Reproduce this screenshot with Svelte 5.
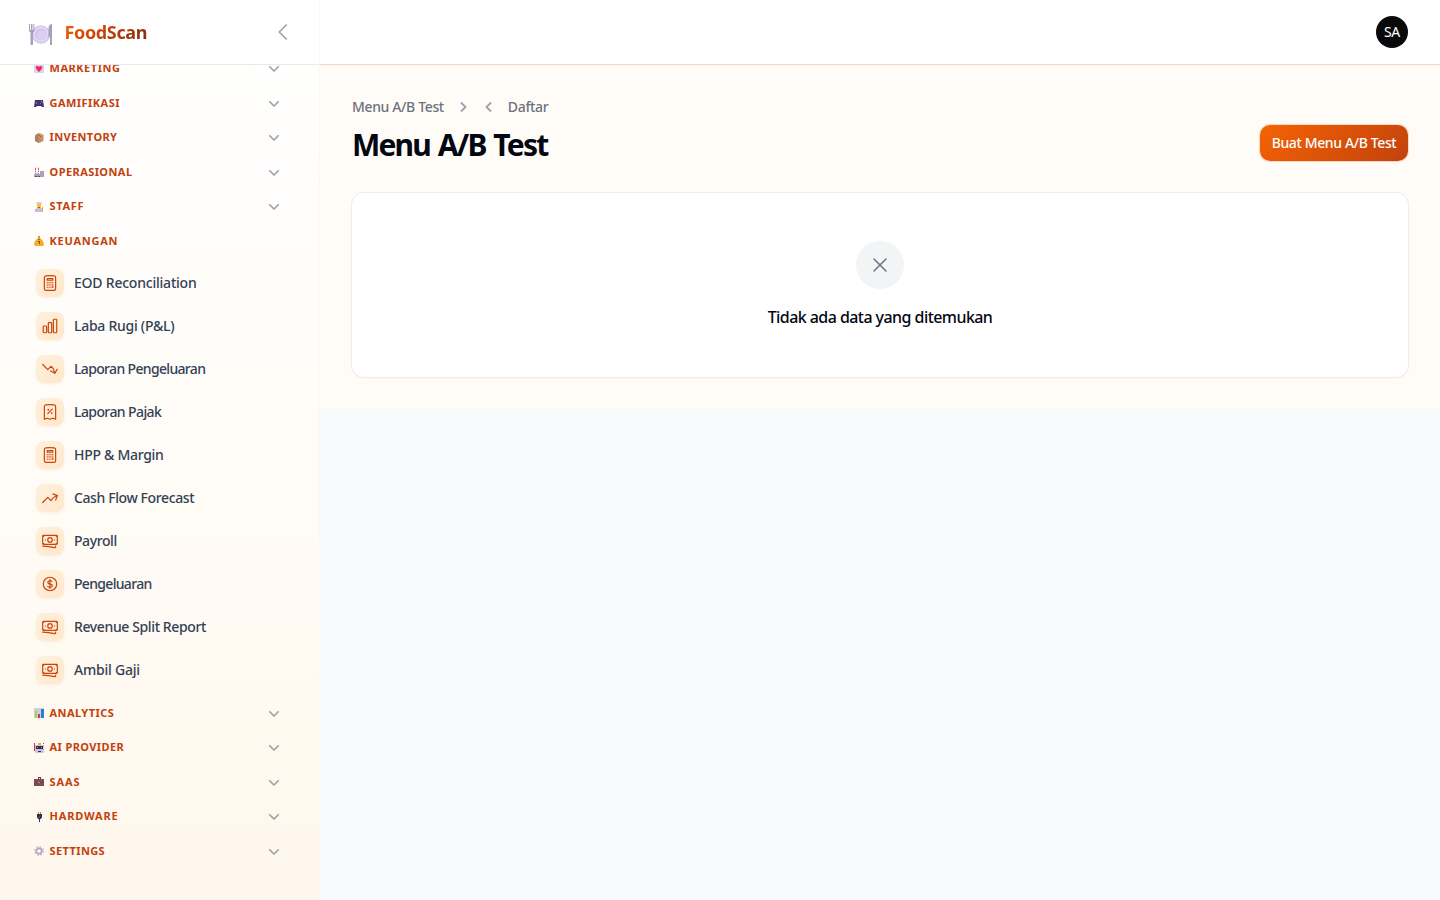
<script lang="ts">
	type Shape = { d: string; fill: string };
	type Group = { label: string; icon: string; tracking: number; open?: boolean };

	const emoji: Record<string, Shape[]> = {
		marketing: [
			{ d: 'M0 1h10v8H0z', fill: '#ddd5ee' },
			{ d: 'M0 2l5 4 5-4v1L5 8 0 3z', fill: '#c9bce0' },
			{ d: 'M2 3.5C2 1.7 4.5 1.7 5 3c.5-1.3 3-1.3 3 .5C8 5.5 5 8 5 8S2 5.5 2 3.5z', fill: '#f8255f' }
		],
		game: [
			{ d: 'M1 2h8l1 7H8L7 8H3L2 9H0z', fill: '#43346f' },
			{ d: 'M2 4h1v2H2z', fill: '#7d70bb' },
			{ d: 'M6 5h1v1H6z', fill: '#2899d8' },
			{ d: 'M7 3h1v1H7z', fill: '#e0b34c' },
			{ d: 'M8 4h1v1H8z', fill: '#cf3768' }
		],
		box: [
			{ d: 'M5 0l4.5 2v6L5 10 1 8V2z', fill: '#c39070' },
			{ d: 'M1 2l4 2v6L1 8z', fill: '#b07f60' },
			{ d: 'M5 0l4.5 2L5 4 1 2z', fill: '#d3a06d' },
			{ d: 'M3 1l4 2v1L3 2z', fill: '#77604e' }
		],
		factory: [
			{ d: 'M1 0h1v8H1zM4 0h1v8H4z', fill: '#d9d3e2' },
			{ d: 'M1 1h1v2H1zM4 1h1v2H4zM1 4h1v1H1zM4 4h1v1H4z', fill: '#df4668' },
			{ d: 'M0 7l3-1 3 1V4h4v6H0z', fill: '#aaa2b9' },
			{ d: 'M1 9h2v1H1zM4 9h2v1H4z', fill: '#584d69' }
		],
		cook: [
			{ d: 'M3 0h4l1 1-1 2H3L2 1z', fill: '#d4cae4' },
			{ d: 'M3 2h4v4H3z', fill: '#ffc327' },
			{ d: 'M1 7l3-1h3l2 1v3H1z', fill: '#c8bbd8' },
			{ d: 'M4 5h2v1H4z', fill: '#d53c4b' },
			{ d: 'M8 5h1v4H8z', fill: '#ebad23' }
		],
		money: [
			{ d: 'M4 0h2v3H4z', fill: '#d39a23' },
			{ d: 'M4 2h2l3 3 1 3-1 2H1L0 8l1-3z', fill: '#f4ac2b' },
			{ d: 'M4 3h2v1H4z', fill: '#ae661c' },
			{ d: 'M5 5h1v3H5zM4 5h2v1H4z', fill: '#805022' }
		],
		chart: [
			{ d: 'M0 0h10v10H0z', fill: '#d4cadf' },
			{ d: 'M1 3h2v7H1z', fill: '#91df40' },
			{ d: 'M4 6h2v4H4z', fill: '#e62a67' },
			{ d: 'M7 1h3v9H7z', fill: '#2084d2' }
		],
		robot: [
			{ d: 'M1 2h9v7L9 10H2L1 9z', fill: '#cbc2dc' },
			{ d: 'M0 0h1v8H0zM9 0h1v1H9z', fill: '#e42460' },
			{ d: 'M4 0h3v2H4z', fill: '#ebb52d' },
			{ d: 'M2 3h7v3H2z', fill: '#302a4c' },
			{ d: 'M3 4h1v1H3zM7 4h1v1H7z', fill: '#4bb9e5' },
			{ d: 'M4 8h3v1H4z', fill: '#37304e' }
		],
		bag: [
			{ d: 'M4 0h3v2H6V1H5v1H4z', fill: '#56404e' },
			{ d: 'M0 2h10v7H0z', fill: '#7e4c55' },
			{ d: 'M0 5h10v1H0z', fill: '#6b424c' },
			{ d: 'M4 5h2v1H4z', fill: '#c68b72' }
		],
		plug: [
			{ d: 'M4 0h1v3H4zM6 0h1v3H6z', fill: '#bd8950' },
			{ d: 'M3 2h5v3L7 7H6v3H5V7H4L3 5z', fill: '#362b48' },
			{ d: 'M5 4h1v2H5z', fill: '#625277' }
		]
	};

	const before: Group[] = [
		{ label: 'MARKETING', icon: 'marketing', tracking: 0.52 },
		{ label: 'GAMIFIKASI', icon: 'game', tracking: 0.46 },
		{ label: 'INVENTORY', icon: 'box', tracking: 0.38 },
		{ label: 'OPERASIONAL', icon: 'factory', tracking: 0.43 },
		{ label: 'STAFF', icon: 'cook', tracking: 0.7 },
		{ label: 'KEUANGAN', icon: 'money', tracking: 0.76, open: true }
	];
	const after: Group[] = [
		{ label: 'ANALYTICS', icon: 'chart', tracking: 0.46 },
		{ label: 'AI PROVIDER', icon: 'robot', tracking: 0.4 },
		{ label: 'SAAS', icon: 'bag', tracking: 0.88 },
		{ label: 'HARDWARE', icon: 'plug', tracking: 0.82 },
		{ label: 'SETTINGS', icon: 'gear', tracking: 0.4 }
	];

	const icons = {
		calculator:
			'M15.75 15.75V18m-7.5-6.75h.008v.008H8.25v-.008Zm0 2.25h.008v.008H8.25V13.5Zm0 2.25h.008v.008H8.25v-.008Zm0 2.25h.008v.008H8.25V18Zm2.498-6.75h.007v.008h-.007v-.008Zm0 2.25h.007v.008h-.007V13.5Zm0 2.25h.007v.008h-.007v-.008Zm0 2.25h.007v.008h-.007V18Zm2.504-6.75h.008v.008h-.008v-.008Zm0 2.25h.008v.008h-.008V13.5Zm0 2.25h.008v.008h-.008v-.008Zm0 2.25h.008v.008h-.008V18Zm2.498-6.75h.008v.008h-.008v-.008Zm0 2.25h.008v.008h-.008V13.5ZM8.25 6h7.5v2.25h-7.5V6ZM12 2.25c-1.892 0-3.758.11-5.593.322C5.307 2.7 4.5 3.65 4.5 4.757V19.5a2.25 2.25 0 0 0 2.25 2.25h10.5a2.25 2.25 0 0 0 2.25-2.25V4.757c0-1.108-.806-2.057-1.907-2.185A48.507 48.507 0 0 0 12 2.25Z',
		bars:
			'M3 13.125C3 12.504 3.504 12 4.125 12h2.25c.621 0 1.125.504 1.125 1.125v6.75C7.5 20.496 6.996 21 6.375 21h-2.25A1.125 1.125 0 0 1 3 19.875v-6.75ZM9.75 8.625c0-.621.504-1.125 1.125-1.125h2.25c.621 0 1.125.504 1.125 1.125v11.25c0 .621-.504 1.125-1.125 1.125h-2.25a1.125 1.125 0 0 1-1.125-1.125V8.625ZM16.5 4.125c0-.621.504-1.125 1.125-1.125h2.25C20.496 3 21 3.504 21 4.125v15.75c0 .621-.504 1.125-1.125 1.125h-2.25a1.125 1.125 0 0 1-1.125-1.125V4.125Z',
		down: 'M2.25 6 9 12.75l4.286-4.286a11.948 11.948 0 0 1 4.306 6.43l.776 2.898m0 0 3.182-5.511m-3.182 5.51-5.511-3.181',
		up: 'M2.25 18 9 11.25l4.306 4.306a11.95 11.95 0 0 1 5.814-5.518l2.74-1.22m0 0-5.94-2.281m5.94 2.28-2.28 5.941',
		receipt:
			'm9 14.25 6-6m4.5-3.493V21.75l-3.75-1.5-3.75 1.5-3.75-1.5-3.75 1.5V4.757c0-1.108.806-2.057 1.907-2.185a48.507 48.507 0 0 1 11.186 0c1.1.128 1.907 1.077 1.907 2.185ZM9.75 9h.008v.008H9.75V9Zm.375 0a.375.375 0 1 1-.75 0 .375.375 0 0 1 .75 0Zm4.125 4.5h.008v.008h-.008V13.5Zm.375 0a.375.375 0 1 1-.75 0 .375.375 0 0 1 .75 0Z',
		notes:
			'M2.25 18.75a60.07 60.07 0 0 1 15.797 2.101c.727.198 1.453-.342 1.453-1.096V18.75M3.75 4.5v.75A.75.75 0 0 1 3 6h-.75m0 0v-.375c0-.621.504-1.125 1.125-1.125H20.25M2.25 6v9m18-10.5v.75c0 .414.336.75.75.75h.75m-1.5-1.5h.375c.621 0 1.125.504 1.125 1.125v9.75c0 .621-.504 1.125-1.125 1.125h-.375m1.5-1.5H21a.75.75 0 0 0-.75.75v.75m0 0H3.75m0 0h-.375a1.125 1.125 0 0 1-1.125-1.125V15m1.5 1.5v-.75A.75.75 0 0 0 3 15h-.75M15 10.5a3 3 0 1 1-6 0 3 3 0 0 1 6 0Zm3 0h.008v.008H18V10.5Zm-12 0h.008v.008H6V10.5Z',
		dollar:
			'M12 6v12m-3-2.818.879.659c1.171.879 3.07.879 4.242 0 1.172-.879 1.172-2.303 0-3.182C13.536 12.219 12.768 12 12 12c-.725 0-1.45-.22-2.003-.659-1.106-.879-1.106-2.303 0-3.182s2.9-.879 4.006 0l.415.33M21 12a9 9 0 1 1-18 0 9 9 0 0 1 18 0Z'
	};

	const items = [
		{ label: 'EOD Reconciliation', icon: icons.calculator, tracking: -0.22 },
		{ label: 'Laba Rugi (P&L)', icon: icons.bars, tracking: -0.27 },
		{ label: 'Laporan Pengeluaran', icon: icons.down, tracking: -0.66 },
		{ label: 'Laporan Pajak', icon: icons.receipt, tracking: -0.59 },
		{ label: 'HPP & Margin', icon: icons.calculator, tracking: -0.29 },
		{ label: 'Cash Flow Forecast', icon: icons.up, tracking: -0.39 },
		{ label: 'Payroll', icon: icons.notes, tracking: -0.42 },
		{ label: 'Pengeluaran', icon: icons.dollar, tracking: -0.68 },
		{ label: 'Revenue Split Report', icon: icons.notes, tracking: -0.38 },
		{ label: 'Ambil Gaji', icon: icons.notes, tracking: -0.22 }
	];
</script>

{#snippet groupRow(group: Group)}
	<button class="group">
		<svg class="emoji" viewBox="0 0 10 10">
			{#if group.icon === 'gear'}
				<circle cx="5" cy="5" r="4.2" fill="none" stroke="#c2b7d4" stroke-width="1.6" stroke-dasharray="1.65 1.65" />
				<circle cx="5" cy="5" r="2.7" fill="none" stroke="#b3a6cb" stroke-width="1.7" />
			{:else}
				{#each emoji[group.icon] as shape}
					<path d={shape.d} fill={shape.fill} />
				{/each}
			{/if}
		</svg>
		<span class="group-label" style:letter-spacing="{group.tracking}px">{group.label}</span>
		{#if !group.open}
			<svg class="chevron" viewBox="0 0 20 20">
				<path d="M5.22 8.22a.75.75 0 0 1 1.06 0L10 11.94l3.72-3.72a.75.75 0 1 1 1.06 1.06l-4.25 4.25a.75.75 0 0 1-1.06 0L5.22 9.28a.75.75 0 0 1 0-1.06Z" />
			</svg>
		{/if}
	</button>
{/snippet}

<div class="app">
	<aside class="sidebar">
		<header class="brand">
			<svg class="brand-icon" viewBox="0 0 24 24">
				<circle cx="12" cy="11.5" r="9.3" fill="#d6c9f0" />
				<circle cx="12" cy="11.5" r="7.4" fill="#e4daf8" />
				<circle cx="12" cy="11.5" r="5.8" fill="#cbbbe6" />
				<circle cx="12.5" cy="12" r="5" fill="#dccff4" />
				<path d="M0 1v6.5Q0 9 1.5 9v13H4V9q1.5 0 1.5-1.5V1h-1v6h-1V1H2v6H1V1z" fill="#aaa0b8" />
				<path d="M23 1v21h-2v-8h-1.5V5Q20 1 23 1z" fill="#aaa0b8" />
			</svg>
			<span class="brand-name">FoodScan</span>
			<svg class="collapse" viewBox="0 0 24 24"><path d="M15.75 19.5 8.25 12l7.5-7.5" /></svg>
		</header>
		<nav>
			<div class="nav-list">
				{#each before as group}
					{@render groupRow(group)}
				{/each}
				<ul>
					{#each items as item}
						<li>
							<span class="item-icon">
								<svg viewBox="0 0 24 24"><path d={item.icon} /></svg>
							</span>
							<span class="item-label" style:letter-spacing="{item.tracking}px">{item.label}</span>
						</li>
					{/each}
				</ul>
				{#each after as group}
					{@render groupRow(group)}
				{/each}
			</div>
		</nav>
	</aside>

	<div class="body">
		<header class="topbar"><span class="avatar">SA</span></header>
		<main>
			<div class="heading">
				<div>
					<div class="crumbs">
						<span>Menu A/B Test</span>
						<svg class="crumb-right" viewBox="0 0 20 20"><path d="m8 5.5 4.5 4.5L8 14.5" /></svg>
						<svg class="crumb-left" viewBox="0 0 20 20"><path d="M12 5.5 7.5 10l4.5 4.5" /></svg>
						<span>Daftar</span>
					</div>
					<h1>Menu A/B Test</h1>
				</div>
				<button class="create">Buat Menu A/B Test</button>
			</div>
			<section class="empty">
				<span class="empty-icon">
					<svg viewBox="0 0 24 24"><path d="M6 18 18 6M6 6l12 12" /></svg>
				</span>
				<h2>Tidak ada data yang ditemukan</h2>
			</section>
		</main>
	</div>
</div>

<style>
	:global(body) {
		background: #f9fafb;
		overflow: hidden;
	}

	.app {
		display: flex;
		height: 100vh;
		font-family: 'Noto Sans', sans-serif;
	}

	button {
		border: none;
		font-family: inherit;
	}

	svg {
		display: block;
		flex-shrink: 0;
	}

	.sidebar {
		width: 320px;
		box-sizing: border-box;
		border-right: 1px solid #fdf8f1;
		display: flex;
		flex-direction: column;
		background: linear-gradient(180deg, #fff 0%, #fffcf7 50%, #fff7ec 100%);
	}

	.brand {
		height: 64px;
		flex-shrink: 0;
		box-sizing: border-box;
		display: flex;
		align-items: center;
		padding: 0 24px 0 29px;
		background: #fff;
		box-shadow: 0 1px 0 #e9e9eb;
		z-index: 1;
	}

	.brand-icon {
		width: 24px;
		height: 24px;
		margin-top: 5px;
	}

	.brand-name {
		margin-left: 11.5px;
		font-size: 18px;
		font-weight: 700;
		line-height: 24px;
		letter-spacing: -0.35px;
		background: linear-gradient(135deg, #f55f04, #c24108 50%, #7c2d12);
		background-clip: text;
		-webkit-background-clip: text;
		color: transparent;
	}

	.collapse {
		width: 24px;
		height: 24px;
		margin-left: auto;
		fill: none;
		stroke: #9ca3af;
		stroke-width: 1.7;
	}

	nav {
		flex: 1;
		min-height: 0;
		overflow: hidden;
	}

	.nav-list {
		margin-top: -13.25px;
		padding: 0 35px 0 34px;
	}

	.group {
		width: 100%;
		height: 34.5px;
		padding: 0;
		display: flex;
		align-items: center;
		background: transparent;
	}

	.emoji {
		width: 10px;
		height: 10px;
		margin-top: 1px;
	}

	.group-label {
		margin-left: 5.5px;
		font-size: 11px;
		font-weight: 700;
		line-height: 18px;
		color: #c2410c;
		white-space: nowrap;
	}

	.chevron {
		width: 20px;
		height: 20px;
		margin-left: auto;
		fill: #9ca3af;
		stroke: #9ca3af;
		stroke-width: 0.2;
	}

	ul {
		list-style: none;
		margin: 3.75px 0;
		padding: 0 0 0 2px;
	}

	li {
		height: 43px;
		display: flex;
		align-items: center;
		gap: 10px;
	}

	.item-icon {
		width: 28px;
		height: 28px;
		display: flex;
		align-items: center;
		justify-content: center;
		border-radius: 8px;
		background: linear-gradient(135deg, #fff0dc, #ffe8cc);
		box-shadow: 0 1px 3px #f973161a;
	}

	.item-icon svg {
		width: 18px;
		height: 18px;
		fill: none;
		stroke: #c9450c;
		stroke-width: 1.6;
		stroke-linecap: round;
		stroke-linejoin: round;
	}

	.item-label {
		margin-top: -1px;
		font-size: 14px;
		font-weight: 500;
		color: #334155;
		white-space: nowrap;
	}

	.body {
		flex: 1;
	}

	.topbar {
		height: 64px;
		box-sizing: border-box;
		padding: 0 32px;
		display: flex;
		align-items: center;
		justify-content: flex-end;
		background: #fff;
		box-shadow: 0 1px 0 #eadbd1, 0 2px 1px #f9731610;
		position: relative;
	}

	.avatar {
		width: 32px;
		height: 32px;
		border-radius: 50%;
		background: #09090b;
		color: #fff;
		font-size: 14px;
		font-weight: 400;
		letter-spacing: -0.3px;
		line-height: 32px;
		text-align: center;
	}

	main {
		height: 345px;
		box-sizing: border-box;
		padding: 32px;
		background: #fffcf7;
	}

	.heading {
		display: flex;
		justify-content: space-between;
		align-items: flex-end;
		height: 97px;
		box-sizing: border-box;
	}

	.heading > div {
		align-self: flex-start;
	}

	.crumbs {
		display: flex;
		align-items: center;
		height: 22px;
		font-size: 14px;
		font-weight: 500;
		letter-spacing: -0.36px;
		color: #6b7280;
	}

	.crumbs svg {
		width: 20px;
		height: 20px;
		fill: none;
		stroke: #9ca3af;
		stroke-width: 1.8;
	}

	.crumbs span {
		margin-top: -1px;
	}

	.crumb-right {
		margin-left: 9px;
	}

	.crumb-left {
		margin: 0 8.5px 0 6.5px;
	}

	h1 {
		margin: 9px 0 0;
		font-size: 30px;
		line-height: 36px;
		font-weight: 700;
		letter-spacing: -1.8px;
		word-spacing: 1.8px;
		color: #030712;
	}

	.create {
		width: 148px;
		height: 36px;
		margin-bottom: 32px;
		padding: 0 0 1px;
		border-radius: 10px;
		color: #fff;
		font-size: 14px;
		font-weight: 500;
		letter-spacing: -0.38px;
		white-space: nowrap;
		background: linear-gradient(135deg, #f56305, #c2410c);
		box-shadow: 0 0 0 1px #f9731640;
	}

	.empty {
		height: 184px;
		box-sizing: border-box;
		padding-top: 48px;
		display: flex;
		flex-direction: column;
		align-items: center;
		border-radius: 12px;
		background: #fff;
		box-shadow: 0 0 0 1px #f1ece7, 0 1px 2px #0000000d;
	}

	.empty-icon {
		width: 48px;
		height: 48px;
		display: flex;
		align-items: center;
		justify-content: center;
		border-radius: 50%;
		background: #f3f4f6;
	}

	.empty-icon svg {
		width: 24px;
		height: 24px;
		fill: none;
		stroke: #6b7280;
		stroke-width: 1.5;
		stroke-linecap: round;
	}

	h2 {
		margin: 16px 0 0;
		font-size: 16px;
		line-height: 24px;
		font-weight: 500;
		letter-spacing: -0.56px;
		color: #030712;
	}
</style>
